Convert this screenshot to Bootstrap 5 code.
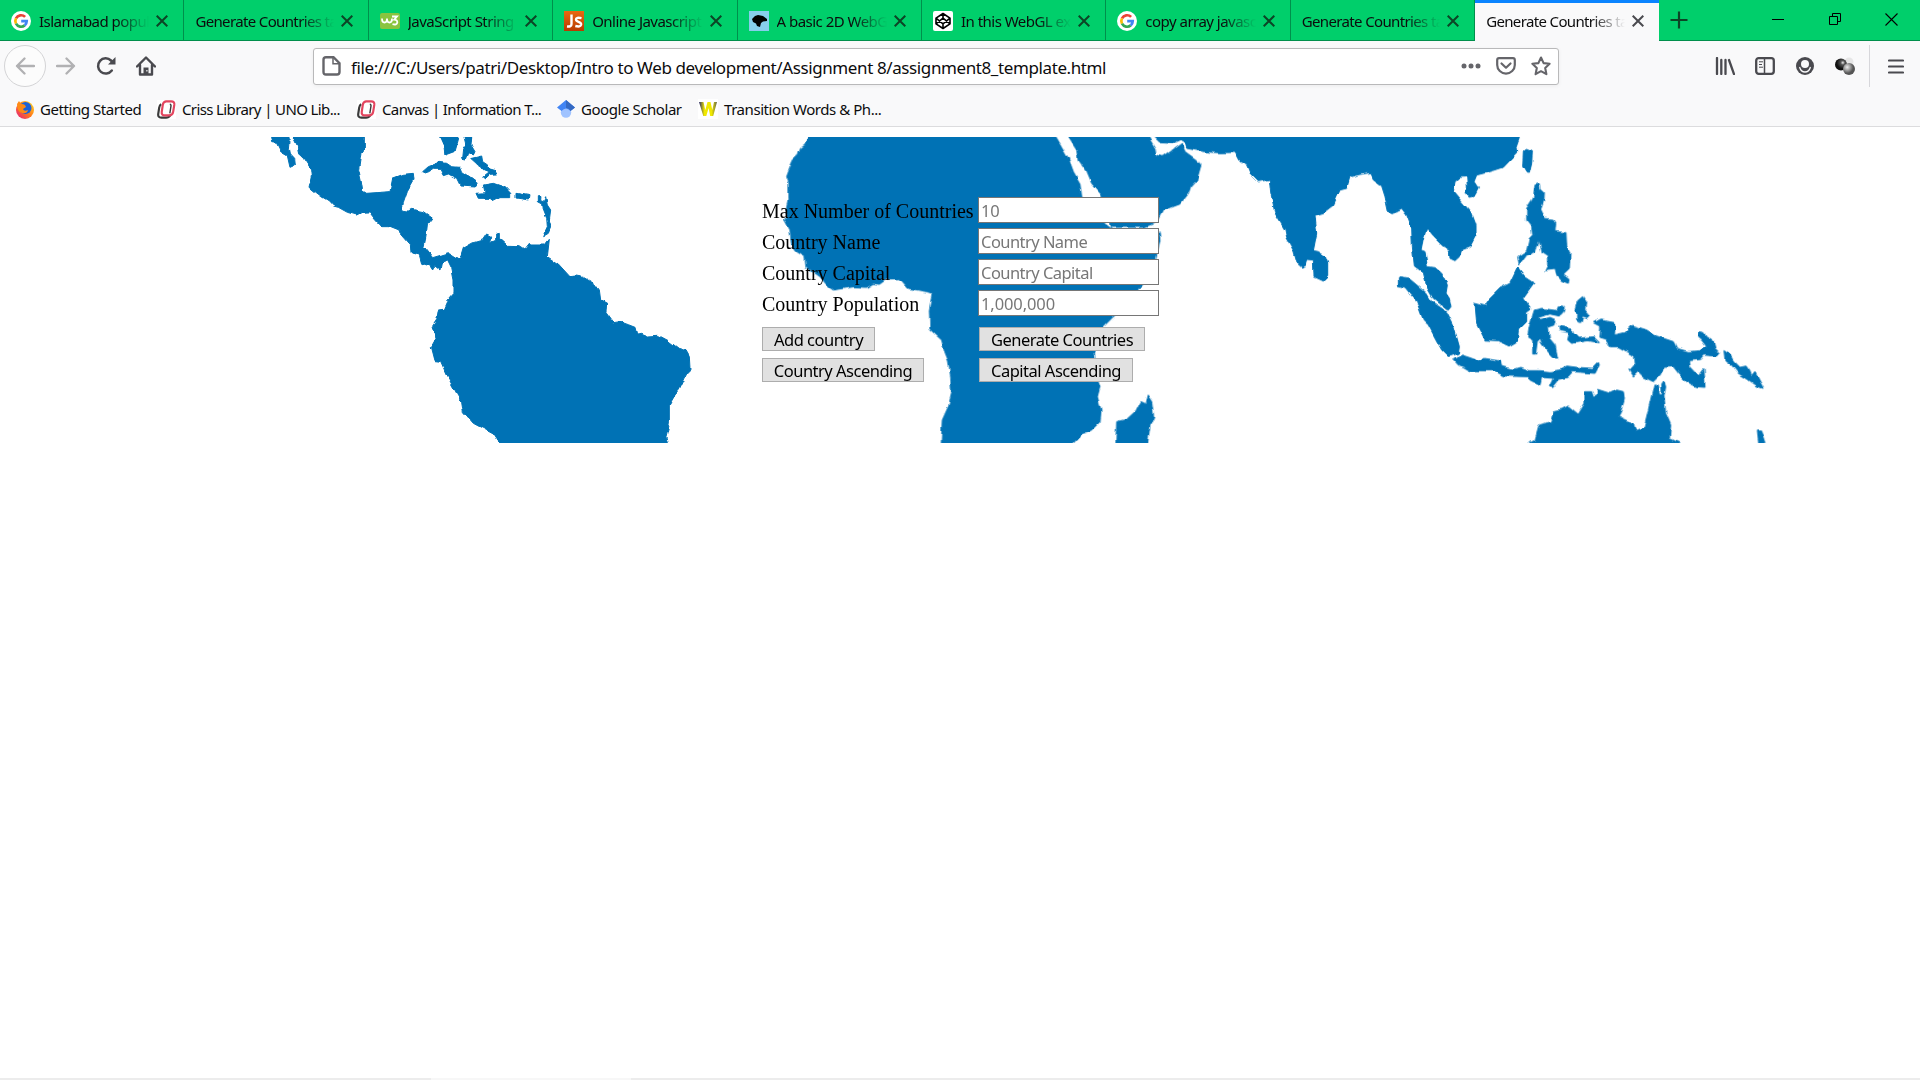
<!DOCTYPE html>
<html lang="en">
<head>
<meta charset="utf-8">
<title>Generate Countries table</title>
<link href="https://cdn.jsdelivr.net/npm/bootstrap@5.3.0/dist/css/bootstrap.min.css" rel="stylesheet">
<style>
html,body{height:100%}
body{font-family:"Noto Sans","Open Sans",sans-serif;background:#fff;color:#0c0c0d;overflow:hidden}
svg{display:block;flex:none}
.tabstrip{height:41px;background:#00cf6b;border-bottom:1px solid #008f4c}
.tab-item{width:184.4px;height:41px;flex:none;padding:1px 15px 0 11px;border-right:1px solid #008f4c;font-size:15px;letter-spacing:-.52px;line-height:20px}
.tab-item.plain{letter-spacing:-.64px}
.tab-item.current{background:#f9f9fa;border-top:3px solid #0a84ff;border-right:0;padding-top:0;padding-bottom:3px;padding-left:11px;height:42px;margin-bottom:-1px;width:183.6px}
.tab-text{flex:1 1 0;min-width:0;overflow:hidden;white-space:nowrap;-webkit-mask-image:linear-gradient(to left,transparent 0,#000 34px);mask-image:linear-gradient(to left,transparent 0,#000 34px);margin-right:7px}
.tab-item .fav{margin-right:8px}
.x{stroke:#0c4526;stroke-width:2;fill:none}
.current .x{stroke:#4a4a4f}
.newtab{margin-left:11px}
.winbtn{width:57px;height:38px}
.chrome{background:#f9f9fa}
.navrow{height:50px;padding-left:4px}
.ico{width:40px}
.backbtn{width:42px;height:42px;border:1px solid #d4d4d6;border-radius:50%;background:#fcfcfc}
.urlbox{width:1246px;height:37px;margin-left:147px;border:1px solid #b9b9ba;border-radius:3px;background:#fff;box-shadow:0 1px 4px rgba(0,0,0,.06);padding:0 7px 0 8px}
.urltext{font-size:17px;letter-spacing:-.395px;line-height:24px;margin-left:10px;padding-top:3px;white-space:nowrap}
.url-actions{gap:15px}
.sep{width:1px;height:42px;background:#d7d7db;margin-left:4px}
.menu-ico{margin:0 16px 0 18px}
.bookrow{height:36px;padding:1px 0 0 16px;border-bottom:1px solid #dcdcde}
.bm{font-size:15px;letter-spacing:-.44px;line-height:20px;gap:6px;white-space:nowrap;flex:none}
.w-s{width:141px}.w-l{width:200px;letter-spacing:-.62px}
.hero{display:grid;margin-top:10px;height:306px}
.hero>*{grid-area:1/1}
.hero form{justify-self:center;width:396px;padding-top:60px;font-family:"Liberation Serif",serif;font-size:20px;color:#000}
.frow{height:31px}
.flabel{width:216px;line-height:28px;white-space:nowrap;flex:none}
.fin{width:181px;height:26px;border:1px solid #767676;padding:1px 2px 1px;font-family:"Noto Sans",sans-serif;font-size:16.5px;letter-spacing:-.55px;background:#fff;border-radius:0}
.fin.num{letter-spacing:-.1px}
.fin::placeholder{color:#777;opacity:1}
.first-btns{margin-top:6px}
.bcell{width:217px;flex:none}
.fbtn{display:block;height:24px;border:1px solid #adadad;background:#e1e1e1;color:#000;font-family:"Noto Sans",sans-serif;font-size:16.5px;letter-spacing:-.5px;line-height:20px;padding:1px 0 0;white-space:nowrap}
.b1{width:113px}.b2{width:166px}.b3{width:162px}.b4{width:154px}
.footline{height:2px;background:#ececec}
.footgap{width:200px;height:2px;margin-left:431px;background:#f7f7f7}
</style>
<script src="https://cdn.jsdelivr.net/npm/bootstrap@5.3.0/dist/js/bootstrap.bundle.min.js"></script>
</head>
<body class="d-flex flex-column">
<svg width="0" height="0" class="position-absolute">
<defs>
<symbol id="close" viewBox="0 0 12 12"><path d="M.7.7l10.6 10.6M11.3.7L.7 11.3"/></symbol>
<symbol id="goog" viewBox="0 0 20 20"><circle cx="10" cy="10" r="10" fill="#fff"/><g fill="none" stroke-width="2.700"><path d="M14.100 5.900A5.700 5.700 0 0 0 5 7.400" stroke="#ea4335"/><path d="M5 7.400a5.700 5.700 0 0 0 0 5.300" stroke="#fbbc05"/><path d="M5 12.700a5.700 5.700 0 0 0 8.700 1.700" stroke="#34a853"/><path d="M13.700 14.400a5.700 5.700 0 0 0 2-4.200H10.200" stroke="#4285f4"/></g></symbol>
<symbol id="uno" viewBox="0 0 20 20"><path fill="#fff" d="M0 0h20v20H0z"/><path d="M4.500 4.500Q2.800 5.200 2.300 8L1.300 14.500Q.8 18.600 4.500 18.600h5Q12.500 18.600 14 16" fill="none" stroke="#3a3a3a" stroke-width="2.300"/><path d="M9.500 1.500h5.500q3.700 0 3.200 3.700L17 12.500q-.6 3.700-4.300 3.700H8.200q-3.700 0-3.200-3.700L6.100 5.200q.4-3.200 3.400-3.700z" fill="none" stroke="#e3455f" stroke-width="2.300"/><path d="M13.500 4.500q1.500.2 1.200 2L13.500 14" fill="none" stroke="#3a3a3a" stroke-width="1.500"/></symbol>
</defs></svg>

<header class="chrome">
<div class="tabstrip d-flex">
 <div class="tab-item d-flex align-items-center"><svg class="fav" width="20" height="20"><use href="#goog"/></svg><span class="tab-text">Islamabad popul</span><svg class="x" width="12" height="12"><use href="#close"/></svg></div>
 <div class="tab-item plain d-flex align-items-center"><span class="tab-text">Generate Countries ta</span><svg class="x" width="12" height="12"><use href="#close"/></svg></div>
 <div class="tab-item d-flex align-items-center"><svg class="fav" width="20" height="20" viewBox="0 0 20 20"><rect y="2" width="20" height="16" rx="2" fill="#8ac43f"/><path d="M2 7.500q0 4 2.500 4T7 7.500q0 4 2.500 4T12 7.500M12 5.500h5l-2.800 3.200q3.300 0 3.100 2.800-.5 2.800-4.800 1.700" fill="none" stroke="#fff" stroke-width="1.800"/></svg><span class="tab-text">JavaScript String</span><svg class="x" width="12" height="12"><use href="#close"/></svg></div>
 <div class="tab-item d-flex align-items-center"><svg class="fav" width="20" height="20" viewBox="0 0 20 20"><defs><linearGradient id="jsg" x2="0" y2="1"><stop stop-color="#e96a10"/><stop offset="1" stop-color="#b83a00"/></linearGradient></defs><path fill="url(#jsg)" d="M0 0h20v20H0z"/><path d="M7.500 3.500v9.500q0 3-4.500 2.500M17.500 7.200q-5.500-1.200-5.500 1.300 0 1.500 2.500 2.300 3 1 2.600 3-.6 2.500-5.800 1.200" fill="none" stroke="#fff" stroke-width="2.400"/></svg><span class="tab-text">Online Javascript</span><svg class="x" width="12" height="12"><use href="#close"/></svg></div>
 <div class="tab-item d-flex align-items-center"><svg class="fav" width="20" height="20" viewBox="0 0 20 20"><path fill="#87ceeb" d="M0 0h20v20H0z"/><path d="M3 8l3-3 3-1 5 1 4 3v2l-4 .5-2 1.500-1 4-3-1-1-2.500L4 11z"/></svg><span class="tab-text">A basic 2D WebGL</span><svg class="x" width="12" height="12"><use href="#close"/></svg></div>
 <div class="tab-item d-flex align-items-center"><svg class="fav" width="20" height="20" viewBox="0 0 20 20"><rect width="20" height="20" rx="2" fill="#fff"/><path d="M10 2.500l7 4.700v5.600l-7 4.700-7-4.700V7.200zM10 2.500v4.700M10 12.800v4.700M3 7.200l7 5.600 7-5.600M3 12.800l7-5.600 7 5.600" fill="none" stroke="#000" stroke-width="1.600" stroke-linejoin="round"/></svg><span class="tab-text">In this WebGL exa</span><svg class="x" width="12" height="12"><use href="#close"/></svg></div>
 <div class="tab-item d-flex align-items-center"><svg class="fav" width="20" height="20"><use href="#goog"/></svg><span class="tab-text">copy array javascr</span><svg class="x" width="12" height="12"><use href="#close"/></svg></div>
 <div class="tab-item plain d-flex align-items-center"><span class="tab-text">Generate Countries ta</span><svg class="x" width="12" height="12"><use href="#close"/></svg></div>
 <div class="tab-item plain current d-flex align-items-center"><span class="tab-text">Generate Countries ta</span><svg class="x" width="12" height="12"><use href="#close"/></svg></div>
 <div class="newtab d-flex align-items-center"><svg width="18" height="18" viewBox="0 0 18 18"><path d="M9 .500v17M.500 9h17" stroke="#0c4526" stroke-width="2.200"/></svg></div>
 <div class="d-flex ms-auto">
  <div class="winbtn d-flex align-items-center justify-content-center"><svg width="12" height="12"><path d="M0 6.500h12" stroke="#000"/></svg></div>
  <div class="winbtn d-flex align-items-center justify-content-center"><svg width="12" height="12"><path d="M.5 3.500h8v8h-8zM3.500 3.500v-3h8v8h-3" fill="none" stroke="#000"/></svg></div>
  <div class="winbtn d-flex align-items-center justify-content-center"><svg width="13" height="13"><path d="M.500.500l12 12M12.500.500l-12 12" stroke="#000" stroke-width="1.100"/></svg></div>
 </div>
</div>

<div class="navrow d-flex align-items-center">
 <div class="backbtn d-flex align-items-center justify-content-center"><svg width="20" height="18" viewBox="0 0 20 18"><path d="M19 9H2M9.500 1.500L2 9l7.500 7.500" fill="none" stroke="#b1b1b3" stroke-width="2.300" stroke-linecap="round" stroke-linejoin="round"/></svg></div>
 <div class="ico d-flex justify-content-center"><svg width="20" height="18" viewBox="0 0 20 18"><path d="M1 9h17M10.500 1.500L18 9l-7.500 7.500" fill="none" stroke="#b1b1b3" stroke-width="2.300" stroke-linecap="round" stroke-linejoin="round"/></svg></div>
 <div class="ico d-flex justify-content-center"><svg width="20" height="20" viewBox="0 0 20 20"><path d="M15.800 14.500A7.600 7.600 0 1 1 15 4.500l2 2" fill="none" stroke="#4a4a4f" stroke-width="2.500" stroke-linecap="round"/><path d="M19.500 1v7.500H12z" fill="#4a4a4f"/></svg></div>
 <div class="ico d-flex justify-content-center"><svg width="20" height="20" viewBox="0 0 20 20"><path d="M1 10.500L10 1.500l9 9M4 9v9.500h12V9" fill="none" stroke="#4a4a4f" stroke-width="2.400" stroke-linecap="round" stroke-linejoin="round"/><path d="M7.500 11.500h5V18h-5z" fill="#4a4a4f"/><path fill="#f9f9fa" d="M10.300 14h1.200v1.500h-1.200z"/></svg></div>
 <div class="urlbox d-flex align-items-center">
  <svg width="19" height="20" viewBox="0 0 19 20"><path d="M4 1.200h7.500l6 6V16q0 2.500-2.500 2.500H4q-2.500 0-2.500-2.500V3.700q0-2.500 2.500-2.500z" fill="none" stroke="#65656a" stroke-width="2.400"/><path d="M11 1.500v6.200h6" fill="none" stroke="#65656a" stroke-width="1.500"/></svg>
  <span class="urltext">file:///C:/Users/patri/Desktop/Intro to Web development/Assignment 8/assignment8_template.html</span>
  <div class="url-actions d-flex align-items-center ms-auto">
   <svg width="20" height="6"><circle cx="3" cy="3" r="2.500" fill="#65656a"/><circle cx="10" cy="3" r="2.500" fill="#65656a"/><circle cx="17" cy="3" r="2.500" fill="#65656a"/></svg>
   <svg width="20" height="18" viewBox="0 0 20 18"><path d="M3 1.200h14q1.800 0 1.800 1.800v5A8.800 8.600 0 0 1 1.200 8V3Q1.200 1.200 3 1.200z" fill="none" stroke="#65656a" stroke-width="2.200"/><path d="M5.500 6.500l4.500 4.200 4.500-4.200" fill="none" stroke="#65656a" stroke-width="2.200" stroke-linecap="round" stroke-linejoin="round"/></svg>
   <svg width="20" height="20" viewBox="0 0 20 20"><path d="M10 1.500l2.600 5.600 6 .7-4.400 4.200 1.200 6.200-5.400-3-5.400 3 1.200-6.200-4.400-4.200 6-.7z" fill="none" stroke="#65656a" stroke-width="2.100" stroke-linejoin="round"/></svg>
  </div>
 </div>
 <div class="d-flex align-items-center ms-auto">
  <div class="ico d-flex justify-content-center"><svg width="20" height="18" viewBox="0 0 20 18"><path d="M2 1v16M6.300 3v14M10.500 3v14M14 3L19 17" fill="none" stroke="#4a4a4f" stroke-width="2.300" stroke-linecap="round"/></svg></div>
  <div class="ico d-flex justify-content-center"><svg width="20" height="18" viewBox="0 0 20 18"><rect x="1.200" y="1.200" width="17.600" height="15.600" rx="2.500" fill="none" stroke="#4a4a4f" stroke-width="2.300"/><path d="M9.500 1v16" stroke="#4a4a4f" stroke-width="1.500"/><path d="M4 4.800h4M4 7.500h3M4 10.200h4" stroke="#4a4a4f"/></svg></div>
  <div class="ico d-flex justify-content-center"><svg width="18" height="18" viewBox="0 0 18 18"><circle cx="9" cy="9" r="9" fill="#4a4a4f"/><circle cx="9" cy="7" r="4" fill="#f9f9fa"/><path d="M3.700 10.500Q5 15 9 15t5.300-4.500" fill="none" stroke="#f9f9fa" stroke-width="1.300" stroke-linecap="round"/></svg></div>
  <div class="ico d-flex justify-content-center"><svg width="20" height="18" viewBox="0 0 20 18"><defs><radialGradient id="ball1" cx=".65" cy=".35"><stop stop-color="#eee"/><stop offset=".35" stop-color="#555"/><stop offset="1" stop-color="#111"/></radialGradient><radialGradient id="ball2" cx=".35" cy=".35"><stop stop-color="#eee"/><stop offset="1" stop-color="#555"/></radialGradient></defs><circle cx="14" cy="5" r="4.500" fill="#e6e6e6"/><circle cx="6" cy="7.500" r="6" fill="url(#ball1)"/><circle cx="14" cy="12" r="6" fill="url(#ball2)"/></svg></div>
  <div class="sep"></div>
  <svg class="menu-ico" width="16" height="15"><path d="M1 1.500h14M1 7.500h14M1 13.500h14" stroke="#4a4a4f" stroke-width="2.200" stroke-linecap="round"/></svg>
 </div>
</div>

<div class="bookrow d-flex align-items-center">
 <div class="bm w-s d-flex align-items-center"><svg width="18" height="19" viewBox="0 0 18 19"><defs><linearGradient id="fx" x1="1" x2="0" y2="1"><stop stop-color="#ffe226"/><stop offset=".5" stop-color="#ff7a1a"/><stop offset="1" stop-color="#e31587"/></linearGradient></defs><circle cx="9" cy="10" r="9" fill="url(#fx)"/><circle cx="9.500" cy="8" r="6" fill="#1b62d8"/><path d="M1 4l2-3 2 3q4-.5 5 3l-3 2q1 3 5 1-1 4-6 3Q1 12 1 4z" fill="#ff8a16"/></svg><span>Getting Started</span></div>
 <div class="bm w-l d-flex align-items-center"><svg width="19" height="19"><use href="#uno"/></svg><span>Criss Library | UNO Lib...</span></div>
 <div class="bm w-l d-flex align-items-center"><svg width="19" height="19"><use href="#uno"/></svg><span>Canvas | Information T...</span></div>
 <div class="bm w-s d-flex align-items-center"><svg width="18" height="18" viewBox="0 0 18 18"><circle cx="9" cy="12.500" r="5.200" fill="#a0c3ff"/><path d="M9 0L0 7.500l4.500 3.500q4.500-5 9 0L18 7.500z" fill="#4285f4"/><path d="M9 0v8q3 0 4.500 3L18 7.500z" fill="#356ac3"/></svg><span>Google Scholar</span></div>
 <div class="bm d-flex align-items-center"><svg width="20" height="20" viewBox="0 0 20 20"><defs><linearGradient id="wg"><stop stop-color="#26266e"/><stop offset=".3" stop-color="#f0e800"/><stop offset=".7" stop-color="#f0e800"/><stop offset="1" stop-color="#66664a"/></linearGradient></defs><path fill="#fff" d="M0 0h20v20H0z"/><path d="M1 3h4.500l1.800 8L9.500 3h3l1.800 8L16 3h3l-3.800 14h-3L10.600 9 8.300 17h-3z" fill="url(#wg)"/></svg><span>Transition Words &amp; Ph...</span></div>
</div>
</header>

<main class="flex-grow-1">
<section class="hero">
<svg width="1920" height="306" viewBox="0 137 1920 306" fill="#0072b5" aria-hidden="true">
<!-- a little noise breaks the straight runs of the coastlines -->
<filter id="coast" filterUnits="userSpaceOnUse" color-interpolation-filters="sRGB" x="250" y="125" width="1540" height="330"><feTurbulence type="fractalNoise" baseFrequency=".12" numOctaves="1" seed="4"/><feDisplacementMap in="SourceGraphic" scale="5" xChannelSelector="R" yChannelSelector="G"/><feGaussianBlur stdDeviation=".5"/></filter>
<g filter="url(#coast)">
<!-- Americas and the Caribbean -->
<g transform="translate(260 130) scale(.33333)" stroke="#0072b5" stroke-width="3" stroke-linejoin="round">
<path d="M32 0V21L35 38 50 40 62 65 82 77 90 112 106 105 104 88 92 75 88 55 90 35 84 21V0Z"/>
<path d="M92 0L98 21L112 50 115 68 130 82 155 120 157 140 150 172 168 187 185 200 205 212 220 228 235 232 262 247 290 255 305 247 328 246 345 268 365 290 385 290 415 302 432 322 448 340 450 368 478 375 485 400 510 408 518 420 525 405 543 420 548 395 563 390 575 415 582 450 582 490 560 515 550 538 535 540 530 570 518 588 530 622 514 650 525 692 542 694 560 735 590 790 605 815 610 845 640 880 700 912 718 939 730 960 1222 960 1222 939 1218 920 1228 880 1228 825 1245 795 1258 780 1275 745 1290 715 1288 680 1278 662 1255 655 1225 632 1195 616 1165 618 1145 610 1130 612 1125 592 1105 584 1080 575 1060 578 1038 548 1040 520 1022 510 1018 480 1005 462 970 442 948 438 930 440 895 402 862 380 868 328 855 345 812 345 808 340 795 357 780 347 742 346 718 325 718 310 710 312 710 328 688 338 695 320 680 312 668 330 640 338 610 355 600 388 568 368 545 375 518 383 492 350 498 320 502 285 518 265 490 245 455 238 445 243 425 240 430 220 442 185 462 150 460 130 430 133 398 145 390 185 320 190 308 183 303 150 296 118 303 70 313 55 313 0Z"/>
<path d="M536 0L542 21L555 50 558 75 585 65 592 40 597 21V0ZM612 0V21L618 45 608 60 605 88 615 90 625 65 640 75 645 65 633 45 635 21V0ZM635 85L665 78 668 95 683 105 680 115 705 122 710 132 690 133 675 147 668 142 685 128 670 122 655 103ZM488 125L505 110 540 97 560 100 575 110 600 112 605 125 635 145 655 160 645 168 600 165 590 145 565 132 550 137 540 118 520 118 500 130ZM670 165L700 160 735 172 752 190 752 203 720 203 700 213 690 205 655 205 648 190 675 188ZM768 190L810 197 808 210 768 204ZM835 197L843 197 842 212 850 215 857 200 862 225 872 240 868 270 873 290 865 310 848 320 862 290 860 265 850 240 848 222 835 215Z"/>
</g>
<!-- Africa, Arabia, Madagascar -->
<g transform="translate(740 130) scale(.33333)" stroke="#0072b5" stroke-width="3" stroke-linejoin="round">
<path d="M210 0L203 21L195 45 182 55 175 75 160 90 152 108 140 140 147 160 147 210 135 270 150 300 155 345 170 365 195 380 198 410 240 440 265 470 280 480 340 470 380 472 400 460 418 463 440 447 480 446 505 475 560 485 577 490 568 540 570 598 605 630 615 670 625 695 628 710 632 740 635 790 625 830 607 870 603 960 980 960 1000 939 1025 912 1055 900 1080 875 1083 840 1072 800 1080 770 1068 740 1065 700 1060 670 1080 600 1120 560 1160 525 1200 470 1240 420 1260 330 1257 305 1120 300 1095 282 1060 230 1025 200 1020 160 1000 125 985 85 965 50 948 21 940 0Z"/>
<path d="M970 0L985 21L1010 60 1015 90 1040 125 1055 160 1085 195 1115 292 1210 292 1235 283 1257 268 1272 240 1320 222 1345 190 1352 170 1370 150 1383 105 1370 90 1335 65 1325 40 1270 80 1248 75 1245 55 1225 21 1215 0ZM1222 795L1235 815 1241 860 1230 885 1220 960 1127 960 1130 875 1160 868 1185 845 1200 815 1215 822Z"/>
</g>
<!-- Southern Asia -->
<g transform="translate(1160 130) scale(.33333)" stroke="#0072b5" stroke-width="3" stroke-linejoin="round">
<path d="M-28 0L-17 21L0 38 35 40 62 28 75 36 80 55 130 65 180 68 225 67 240 95 260 105 270 130 295 155 328 148 332 190 345 250 375 300 380 325 402 365 412 400 425 412 435 405 440 388 460 390 462 440 490 453 503 440 503 400 495 378 475 365 460 362 470 310 465 255 490 248 520 225 540 180 560 175 570 140 600 133 630 128 640 150 665 168 675 200 685 245 700 248 725 235 740 255 755 295 757 350 763 408 790 428 800 470 820 505 865 540 873 530 868 505 858 490 862 465 845 430 825 413 802 410 795 365 783 360 790 325 800 295 820 320 845 345 868 362 870 385 885 392 898 380 905 360 930 350 948 315 948 285 935 250 905 215 880 185 885 155 900 142 920 140 922 170 912 188 925 202 945 195 955 175 942 155 950 135 1000 122 1030 112 1070 70 1068 50 1078 21 1082 0Z"/>
<path d="M1090 65L1103 55 1117 62 1115 100 1108 130 1098 128 1088 110ZM715 442L750 448 800 490 815 515 860 545 880 585 898 650 895 670 865 680 845 660 805 585 790 570 770 515 735 472 715 467ZM945 520L975 528 985 510 1020 475 1050 460 1073 412 1095 440 1122 458 1088 505 1113 538 1100 548 1100 575 1075 600 1072 635 1050 648 1015 632 975 630 960 600 950 580Z"/>
</g>
<!-- Philippines, Indonesia, New Guinea, Australia -->
<g transform="translate(1500 130) scale(.33333)" stroke="#0072b5" stroke-width="3" stroke-linejoin="round">
<path d="M-138 690L-115 675 -85 685 -60 695 -50 685 0 693 5 710 40 718 60 712 85 722 120 722 150 725 180 720 200 708 230 712 278 715 295 697 298 705 285 730 220 725 205 742 175 748 155 773 148 770 160 745 125 742 120 765 90 750 80 740 15 738 -20 722 -90 722 -110 710 -125 705Z"/>
<path d="M105 165L118 162 120 178 133 190 132 210 122 238 135 265 160 268 167 280 165 305 198 308 200 350 210 370 208 415 190 432 207 445 205 460 185 452 170 435 165 418 135 422 143 405 142 380 127 370 118 330 105 365 80 375 58 405 53 380 80 362 88 325 98 315 95 290 80 270 80 235 100 205ZM103 540L125 535 170 542 175 530 193 532 190 545 178 558 150 552 115 562 118 572 150 562 168 570 165 585 145 592 148 625 165 645 173 685 160 683 140 660 125 640 122 625 115 630 110 672 98 672 98 630 83 622 88 590ZM233 512L248 500 257 515 255 540 268 555 262 563 248 558 242 578 233 572 233 548 225 540ZM177 588L215 598 220 610 235 625 280 620 298 638 265 632 215 640 203 630 208 608 178 602Z"/>
<path d="M280 578L300 567 340 575 345 590 343 615 375 608 398 586 440 600 470 618 520 635 530 655 565 665 600 662 620 650 605 630 593 620 595 605 612 608 617 620 640 635 645 655 658 668 650 678 610 675 600 688 565 692 568 710 595 738 612 715 615 772 590 770 560 755 540 735 520 710 492 712 480 735 460 755 430 740 415 725 400 738 390 720 403 705 400 675 355 650 330 650 318 630 300 625 302 590ZM672 662L690 675 700 692 720 712 738 708 750 725 755 740 765 727 790 775 775 770 735 742 715 730 695 705 675 690Z"/>
<path d="M75 960L90 939L105 930 118 885 155 875 165 842 185 838 205 828 235 853 255 820 255 785 275 785 280 802 292 795 292 778 330 790 350 780 370 785 373 805 362 845 355 858 400 880 405 902 432 892 445 840 462 765 475 768 478 790 487 792 485 765 492 755 497 770 492 800 497 850 512 885 508 925 538 939 550 960ZM772 900L782 900 795 939 800 960 778 960Z"/>
</g>
</g>
</svg>
<form>
 <div class="frow d-flex"><label class="flabel">Max Number of Countries</label><input class="fin num" placeholder="10"></div>
 <div class="frow d-flex"><label class="flabel">Country Name</label><input class="fin" placeholder="Country Name"></div>
 <div class="frow d-flex"><label class="flabel">Country Capital</label><input class="fin" placeholder="Country Capital"></div>
 <div class="frow d-flex"><label class="flabel">Country Population</label><input class="fin num" placeholder="1,000,000"></div>
 <div class="frow first-btns d-flex"><div class="bcell"><button type="button" class="fbtn b1">Add country</button></div><button type="button" class="fbtn b2">Generate Countries</button></div>
 <div class="frow d-flex"><div class="bcell"><button type="button" class="fbtn b3">Country Ascending</button></div><button type="button" class="fbtn b4">Capital Ascending</button></div>
</form>
</section>
</main>
<div class="footline"><div class="footgap"></div></div>
</body>
</html>
